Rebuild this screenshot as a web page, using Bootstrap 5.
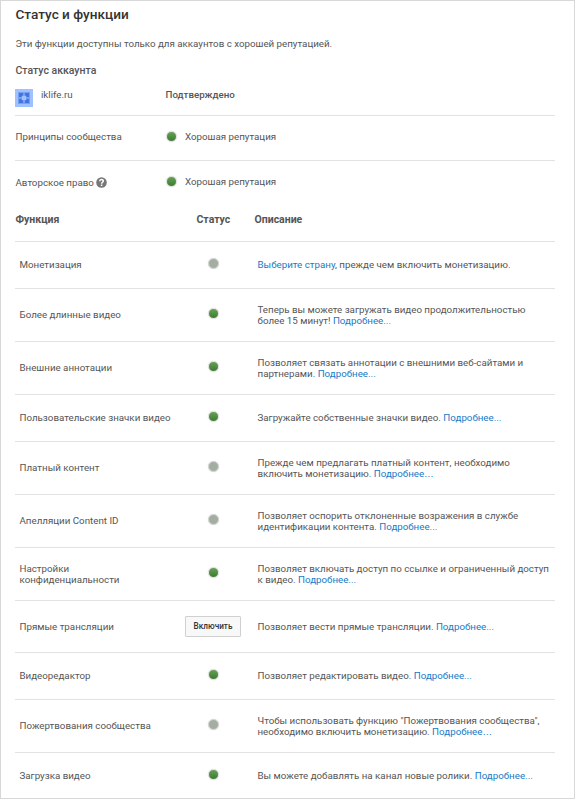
<!DOCTYPE html>
<html lang="ru">
<head>
<meta charset="utf-8">
<meta name="viewport" content="width=device-width, initial-scale=1">
<title>Статус и функции</title>
<link href="https://cdn.jsdelivr.net/npm/bootstrap@5.3.0/dist/css/bootstrap.min.css" rel="stylesheet">
<style>
body{font-family:Roboto,"Liberation Sans",sans-serif;font-size:9.75px;line-height:11px;color:#555;background:#fff}
.panel{height:799px;border:1px solid #d8d8d8;padding:4px 19px 0 14px;overflow:hidden}
.panel a{color:#167ac6;text-decoration:none}
.page-title{font-size:13.6px;line-height:18px;font-weight:500;color:#333;margin:0 0 15px;padding-left:.5px}
.intro{margin:0 0 15px;padding-left:.5px}
.section-title{font-size:10.5px;line-height:13px;font-weight:500;margin:0 0 12px;padding-left:.5px}
.rule{border-bottom:1px solid #e2e2e2}
.account{height:27px}
.avatar{width:18px;height:18px;margin-right:8px}
.c-label{width:150px;padding-left:.5px}
.account .c-label{padding-left:0}
.verified{padding-left:.5px}
.standing{height:45px;padding-bottom:3px}
.standing .dot{margin-left:.5px}
.value{margin-left:8.5px}
.standing:last-child>.dot,.standing:last-child>.value{margin-bottom:2px}
.help{margin-left:2px}
.feature-head{height:36px;font-weight:700;font-size:10.5px;padding-top:8px}
.h-name{width:181.5px;padding-left:.5px}
.h-state{width:58px}
.feature{height:53px;padding-left:4.5px}
.feature.short{height:47px}
.feature.action{height:52px}
.c-name{width:165.5px;flex:none}
.feature:not(.action) .one-line{padding-bottom:2px}
.c-state{width:56px;flex:none}
.c-text{margin-left:16.5px;white-space:nowrap}
.dot{display:block;width:11px;height:11px;border-radius:50%;border:1px solid #dcdcdc;background:#a3ada0;box-shadow:0 0 1px #ccc}
.dot.on{background:linear-gradient(#65a252,#3c7b31)}
.feature .dot{margin-bottom:4px}
.wide-dots{font-family:"Liberation Sans",sans-serif}
.btn-enable{width:56px;height:21px;padding:0;font-size:8.2px;line-height:19px;font-weight:500;color:#333;background:#f8f8f8;border:1px solid #d0d0d0;border-radius:1px}
</style>
</head>
<body>
<main class="panel">
  <h1 class="page-title">Статус и функции</h1>
  <p class="intro">Эти функции доступны только для аккаунтов с хорошей репутацией.</p>
  <h2 class="section-title">Статус аккаунта</h2>
  <section>
    <div class="account rule d-flex align-items-start">
      <div class="c-label d-flex">
        <svg class="avatar" viewBox="0 0 18 18"><path fill="#a0c0ff" d="M0 0h18v18H0z"/><path fill="#78a0f2" d="M3 3h12v12H3z"/><path fill="#4174e3" d="M4 4h4v2L6 8H4zM10 4h4v4h-2l-2-2zM4 10h2l2 2v2H4zM12 10h2v4h-4v-2z"/><path fill="#a0c0ff" d="M7 7h4v4H7z"/></svg>
        <span class="user">iklife.ru</span>
      </div>
      <span class="fw-medium verified">Подтверждено</span>
    </div>
    <div class="standing rule d-flex align-items-center">
      <div class="c-label">Принципы сообщества</div><i class="dot on"></i><span class="value">Хорошая репутация</span>
    </div>
    <div class="standing d-flex align-items-center">
      <div class="c-label d-flex align-items-center">Авторское право
        <svg class="help" width="11" height="11" viewBox="0 0 11 11"><circle cx="5.5" cy="5.5" r="5.3" fill="#777"/><path fill="none" stroke="#fff" stroke-width="1.5" d="M3.7 4.2C3.8 1.8 7.3 1.9 7.3 4c0 1.3-1.7 1.2-1.7 2.7M5.6 7.5V9"/></svg>
      </div><i class="dot on"></i><span class="value">Хорошая репутация</span>
    </div>
  </section>
  <section>
    <div class="feature-head rule d-flex"><div class="h-name">Функция</div><div class="h-state">Статус</div><div>Описание</div></div>
    <div class="feature short rule d-flex align-items-center"><div class="c-name one-line">Монетизация</div><div class="c-state d-flex justify-content-center"><i class="dot"></i></div><div class="c-text one-line"><a href="#">Выберите страну</a>, прежде чем включить монетизацию.</div></div>
    <div class="feature rule d-flex align-items-center"><div class="c-name one-line">Более длинные видео</div><div class="c-state d-flex justify-content-center"><i class="dot on"></i></div><div class="c-text">Теперь вы можете загружать видео продолжительностью<br>более 15 минут! <a href="#">Подробнее...</a></div></div>
    <div class="feature rule d-flex align-items-center"><div class="c-name one-line">Внешние аннотации</div><div class="c-state d-flex justify-content-center"><i class="dot on"></i></div><div class="c-text">Позволяет связать аннотации с внешними веб-сайтами и<br>партнерами. <a href="#">Подробнее...</a></div></div>
    <div class="feature short rule d-flex align-items-center"><div class="c-name one-line">Пользовательские значки видео</div><div class="c-state d-flex justify-content-center"><i class="dot on"></i></div><div class="c-text one-line">Загружайте собственные значки видео. <a href="#">Подробнее...</a></div></div>
    <div class="feature rule d-flex align-items-center"><div class="c-name one-line">Платный контент</div><div class="c-state d-flex justify-content-center"><i class="dot"></i></div><div class="c-text">Прежде чем предлагать платный контент, необходимо<br>включить монетизацию. <a href="#">Подробнее<span class="wide-dots">…</span></a></div></div>
    <div class="feature rule d-flex align-items-center"><div class="c-name one-line">Апелляции Content ID</div><div class="c-state d-flex justify-content-center"><i class="dot"></i></div><div class="c-text">Позволяет оспорить отклоненные возражения в службе<br>идентификации контента. <a href="#">Подробнее...</a></div></div>
    <div class="feature rule d-flex align-items-center"><div class="c-name">Настройки<br>конфиденциальности</div><div class="c-state d-flex justify-content-center"><i class="dot on"></i></div><div class="c-text">Позволяет включать доступ по ссылке и ограниченный доступ<br>к видео. <a href="#">Подробнее...</a></div></div>
    <div class="feature action rule d-flex align-items-center"><div class="c-name one-line">Прямые трансляции</div><div class="c-state"><button class="btn btn-enable d-block" type="button">Включить</button></div><div class="c-text one-line">Позволяет вести прямые трансляции. <a href="#">Подробнее...</a></div></div>
    <div class="feature short rule d-flex align-items-center"><div class="c-name one-line">Видеоредактор</div><div class="c-state d-flex justify-content-center"><i class="dot on"></i></div><div class="c-text one-line">Позволяет редактировать видео. <a href="#">Подробнее...</a></div></div>
    <div class="feature rule d-flex align-items-center"><div class="c-name one-line">Пожертвования сообщества</div><div class="c-state d-flex justify-content-center"><i class="dot"></i></div><div class="c-text">Чтобы использовать функцию "Пожертвования сообщества",<br>необходимо включить монетизацию. <a href="#">Подробнее<span class="wide-dots">…</span></a></div></div>
    <div class="feature short d-flex align-items-center"><div class="c-name one-line">Загрузка видео</div><div class="c-state d-flex justify-content-center"><i class="dot on"></i></div><div class="c-text one-line">Вы можете добавлять на канал новые ролики. <a href="#">Подробнее...</a></div></div>
  </section>
</main>
<script src="https://cdn.jsdelivr.net/npm/bootstrap@5.3.0/dist/js/bootstrap.bundle.min.js"></script>
</body>
</html>
